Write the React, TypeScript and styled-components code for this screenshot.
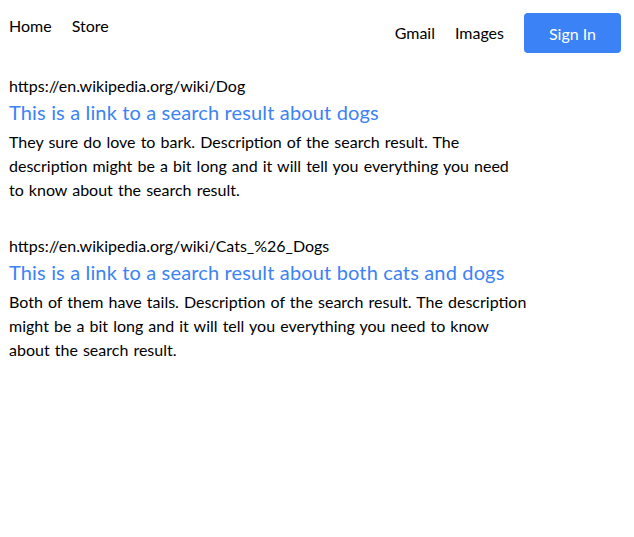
import styled, { createGlobalStyle } from 'styled-components';

const GlobalStyle = createGlobalStyle`
  body {
    margin: 0;
    background: #ffffff;
    color: #000000;
    font-family: Lato, 'Open Sans', sans-serif;
  }
`;

const results = [
  {
    url: 'https://en.wikipedia.org/wiki/Dog',
    title: 'This is a link to a search result about dogs',
    text: 'They sure do love to bark. Description of the search result. The description might be a bit long and it will tell you everything you need to know about the search result.',
  },
  {
    url: 'https://en.wikipedia.org/wiki/Cats_%26_Dogs',
    title: 'This is a link to a search result about both cats and dogs',
    text: 'Both of them have tails. Description of the search result. The description might be a bit long and it will tell you everything you need to know about the search result.',
  },
];

const App = () => {
  return (
    <Page>
      <GlobalStyle />
      <Header>
        <NavLeft>
          <NavLink href='#'>Home</NavLink>
          <NavLink href='#'>Store</NavLink>
        </NavLeft>
        <NavRight>
          <NavLink href='#'>Gmail</NavLink>
          <NavLink href='#'>Images</NavLink>
          <SignIn>Sign In</SignIn>
        </NavRight>
      </Header>
      <Results>
        {results.map((r) => (
          <Result key={r.url}>
            <Url>{r.url}</Url>
            <Title href='#'>{r.title}</Title>
            <Description>{r.text}</Description>
          </Result>
        ))}
      </Results>
    </Page>
  );
};

export default App; /*


*/ // Styling

const Page = styled.div`
  padding: 0 13px 0 9px;
  font-size: 16px;
  line-height: 24px;
`;

const Header = styled.header`
  display: flex;
  justify-content: space-between;
  align-items: flex-start;
  padding-top: 13px;
  height: 74px;
  box-sizing: border-box;
`;

const NavLeft = styled.nav`
  display: flex;
  gap: 20px;
  margin-top: 1px;
`;

const NavRight = styled.nav`
  display: flex;
  align-items: center;
  gap: 20px;
`;

const NavLink = styled.a`
  color: #000000;
  text-decoration: none;
`;

const SignIn = styled.button`
  width: 97px;
  height: 40px;
  border: none;
  border-radius: 4px;
  background: #3b82f6;
  color: #ffffff;
  font-family: inherit;
  font-size: 16px;
`;

const Results = styled.main`
  max-width: 518px;
`;

const Result = styled.section`
  margin-bottom: 32px;
`;

const Url = styled.div``;

const Title = styled.a`
  display: block;
  font-size: 20px;
  line-height: 28px;
  letter-spacing: 0.15px;
  color: #3b82f6;
  text-decoration: none;
  margin-bottom: 4px;
`;

const Description = styled.p`
  margin: 0;
  word-spacing: 1px;
`;
